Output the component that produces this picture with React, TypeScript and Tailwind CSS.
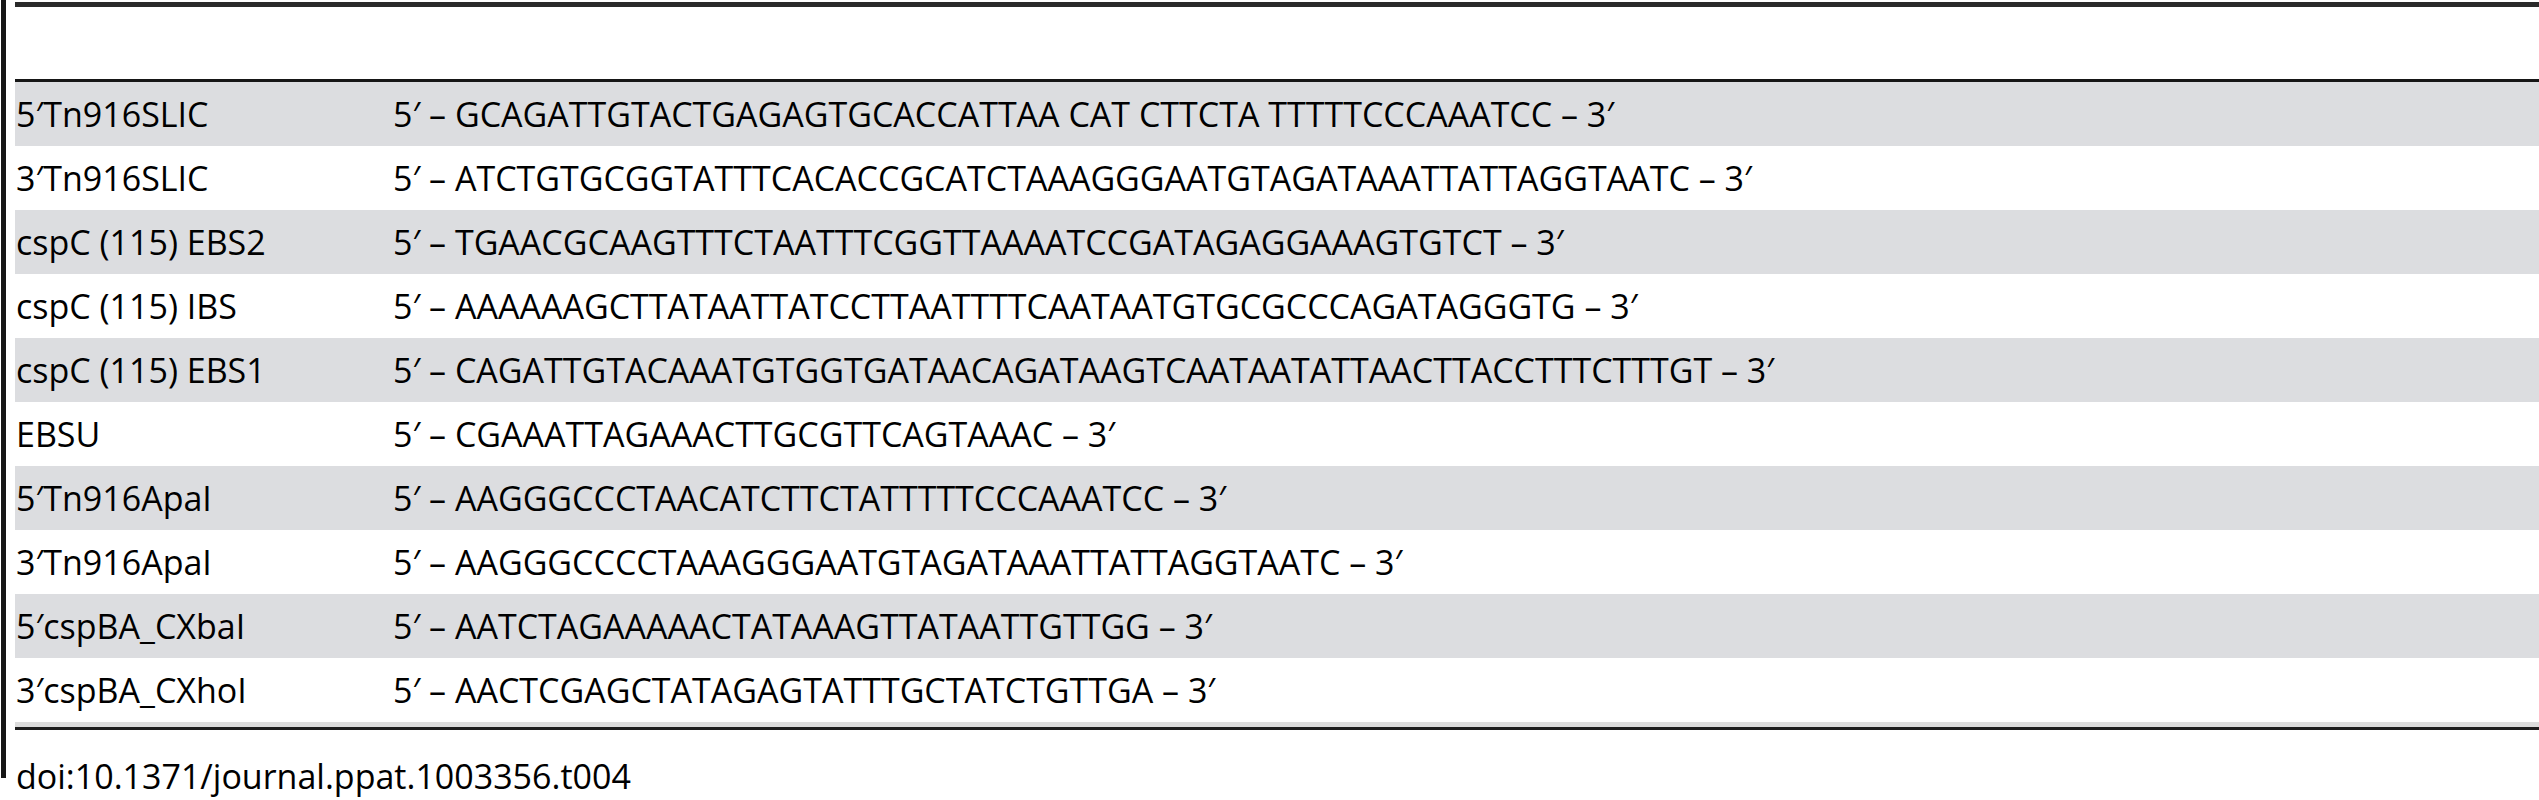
import * as React from 'react'

interface Primer {
  name: string
  sequence: string
}

const primers: Primer[] = [
  { name: "5′Tn916SLIC", sequence: "5′ – GCAGATTGTACTGAGAGTGCACCATTAA CAT CTTCTA TTTTTCCCAAATCC – 3′" },
  { name: "3′Tn916SLIC", sequence: "5′ – ATCTGTGCGGTATTTCACACCGCATCTAAAGGGAATGTAGATAAATTATTAGGTAATC – 3′" },
  { name: "cspC (115) EBS2", sequence: "5′ – TGAACGCAAGTTTCTAATTTCGGTTAAAATCCGATAGAGGAAAGTGTCT – 3′" },
  { name: "cspC (115) IBS", sequence: "5′ – AAAAAAGCTTATAATTATCCTTAATTTTCAATAATGTGCGCCCAGATAGGGTG – 3′" },
  { name: "cspC (115) EBS1", sequence: "5′ – CAGATTGTACAAATGTGGTGATAACAGATAAGTCAATAATATTAACTTACCTTTCTTTGT – 3′" },
  { name: "EBSU", sequence: "5′ – CGAAATTAGAAACTTGCGTTCAGTAAAC – 3′" },
  { name: "5′Tn916ApaI", sequence: "5′ – AAGGGCCCTAACATCTTCTATTTTTCCCAAATCC – 3′" },
  { name: "3′Tn916ApaI", sequence: "5′ – AAGGGCCCCTAAAGGGAATGTAGATAAATTATTAGGTAATC – 3′" },
  { name: "5′cspBA_CXbaI", sequence: "5′ – AATCTAGAAAAACTATAAAGTTATAATTGTTGG – 3′" },
  { name: "3′cspBA_CXhoI", sequence: "5′ – AACTCGAGCTATAGAGTATTTGCTATCTGTTGA – 3′" },
]

export default function App() {
  return (
    <div className="flex w-[2539px] h-[800px] bg-white text-black overflow-hidden font-['Open_Sans','Noto_Sans',sans-serif]">
      {/* left margin rule */}
      <div className="ml-[1px] w-[5px] h-[778px] bg-[#161616]" />

      <div className="ml-[9px] flex-1">
        {/* table head */}
        <div className="mt-[2px] h-[5px] bg-[#2a2a2a]" />
        <div className="h-[72px]" />
        <div className="h-[3px] bg-[#161616]" />

        {/* rows */}
        {primers.map((p, i) => (
          <div
            key={p.name}
            className={`flex items-center h-[64px] text-[34px] leading-none whitespace-nowrap ${
              i % 2 === 0 ? "bg-[#dcdde0]" : "bg-white"
            }`}
          >
            <div className="w-[378px] pl-[1px]">{p.name}</div>
            <div>{p.sequence}</div>
          </div>
        ))}

        {/* table foot */}
        <div className="h-[5px] bg-[#dcdcdc]" />
        <div className="h-[3px] bg-[#1e1e1e]" />

        <div className="mt-[31px] pl-[1px] text-[34px] leading-[30px]">
          doi:10.1371/journal.ppat.1003356.t004
        </div>
      </div>
    </div>
  )
}
